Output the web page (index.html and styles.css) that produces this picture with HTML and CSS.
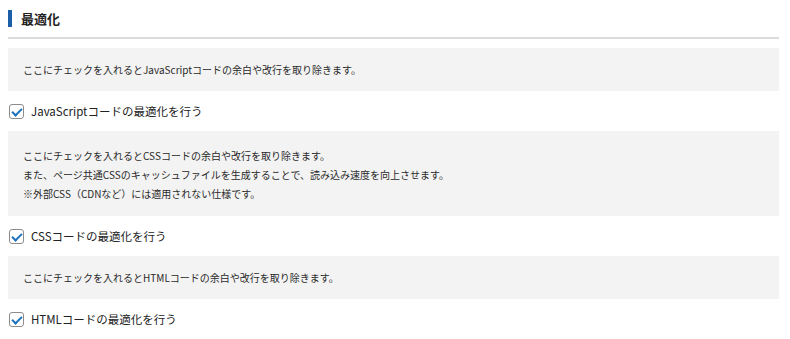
FILE: index.html
```html
<!DOCTYPE html>
<html lang="ja">
<head>
    <meta charset="UTF-8">
    <title>最適化</title>
    <link rel="stylesheet" href="styles.css">
</head>
<body>
    <div class="settings">
        <h2 class="section-title">最適化</h2>

        <div class="help-box">
            <p>ここにチェックを入れるとJavaScriptコードの余白や改行を取り除きます。</p>
        </div>
        <label class="check-row">
            <input type="checkbox" checked>
            <span>JavaScriptコードの最適化を行う</span>
        </label>

        <div class="help-box multi">
            <p>ここにチェックを入れるとCSSコードの余白や改行を取り除きます。</p>
            <p>また、ページ共通CSSのキャッシュファイルを生成することで、読み込み速度を向上させます。</p>
            <p>※外部CSS（CDNなど）には適用されない仕様です。</p>
        </div>
        <label class="check-row">
            <input type="checkbox" checked>
            <span>CSSコードの最適化を行う</span>
        </label>

        <div class="help-box">
            <p>ここにチェックを入れるとHTMLコードの余白や改行を取り除きます。</p>
        </div>
        <label class="check-row">
            <input type="checkbox" checked>
            <span>HTMLコードの最適化を行う</span>
        </label>
    </div>
</body>
</html>
```

FILE: styles.css
```css
body {
    margin: 0;
    background-color: #fff;
    color: #333;
    font-family: "Noto Sans CJK JP", "Noto Sans", sans-serif;
}

.settings {
    padding: 8px 11px 0 8px;
}

/* Section heading with blue bar */
.section-title {
    margin: 0 0 9px;
    padding: 2px 0 9px 13px;
    border-bottom: 2px solid #dcdcdc;
    position: relative;
    font-size: 13px;
    font-weight: bold;
    line-height: 18px;
    color: #222;
}

.section-title::before {
    content: "";
    position: absolute;
    left: 0;
    top: 2px;
    width: 4px;
    height: 17px;
    background-color: #1d5ea8;
}

/* Grey help boxes */
.help-box {
    padding: 12px 15px;
    background-color: #f3f3f3;
    font-size: 10px;
    line-height: 19px;
    color: #2a2a2a;
}

.help-box.multi {
    padding: 15px 15px 13px;
}

.help-box p {
    margin: 0;
}

/* Checkbox rows */
.check-row {
    display: flex;
    align-items: center;
    gap: 7px;
    padding: 13px 0 12px;
    font-size: 11.5px;
    line-height: 15px;
    color: #222;
}

.check-row input {
    appearance: none;
    margin: 0 0 0 1px;
    width: 15px;
    height: 15px;
    border: 1px solid #8c8c8c;
    border-radius: 3px;
    background-color: #fff;
    display: grid;
    place-items: center;
}

.check-row input:checked::after {
    content: "";
    width: 4px;
    height: 8px;
    margin-top: -2px;
    border: solid #1e73be;
    border-width: 0 2px 2px 0;
    transform: rotate(45deg);
}
```
